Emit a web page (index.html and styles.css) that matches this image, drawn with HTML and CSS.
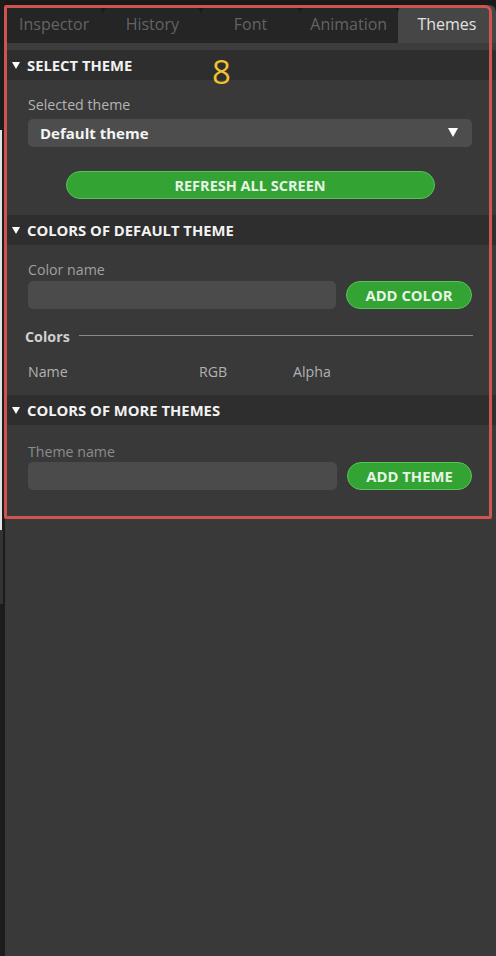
FILE: index.html
```html
<!DOCTYPE html>
<html>
<head>
<meta charset="utf-8">
<link rel="stylesheet" href="styles.css">
</head>
<body>
  <div class="edge">
    <div class="edge-top"></div>
    <div class="edge-line"></div>
    <div class="edge-gray"></div>
  </div>
  <div class="panel">
    <div class="tabs">
      <div class="tab">Inspector</div>
      <div class="tab">History</div>
      <div class="tab">Font</div>
      <div class="tab">Animation</div>
      <div class="tab active">Themes</div>
    </div>
    <div class="strip"></div>

    <div class="sec-head">
      <svg class="caret" width="8" height="7" viewBox="0 0 8 7"><path d="M0 0H8L4 7Z" fill="#fff"/></svg>
      <span>SELECT THEME</span>
    </div>
    <div class="sec-body body1">
      <div class="label">Selected theme</div>
      <div class="select">
        <span>Default theme</span>
        <svg width="10" height="9" viewBox="0 0 10 9"><path d="M0 0H10L5 9Z" fill="#fff"/></svg>
      </div>
      <div class="btn refresh">REFRESH ALL SCREEN</div>
    </div>

    <div class="sec-head">
      <svg class="caret" width="8" height="7" viewBox="0 0 8 7"><path d="M0 0H8L4 7Z" fill="#fff"/></svg>
      <span>COLORS OF DEFAULT THEME</span>
    </div>
    <div class="sec-body body2">
      <div class="label">Color name</div>
      <div class="row">
        <div class="input"></div>
        <div class="btn add">ADD COLOR</div>
      </div>
      <div class="divider">
        <span>Colors</span>
        <div class="rule"></div>
      </div>
      <div class="cols">
        <span>Name</span>
        <span>RGB</span>
        <span>Alpha</span>
      </div>
    </div>

    <div class="sec-head">
      <svg class="caret" width="8" height="7" viewBox="0 0 8 7"><path d="M0 0H8L4 7Z" fill="#fff"/></svg>
      <span>COLORS OF MORE THEMES</span>
    </div>
    <div class="sec-body body3">
      <div class="label dim">Theme name</div>
      <div class="row">
        <div class="input"></div>
        <div class="btn add">ADD THEME</div>
      </div>
    </div>
  </div>

  <div class="annot-box"></div>
  <div class="annot-num">8</div>
</body>
</html>
```

FILE: styles.css
```css
html, body {
  margin: 0;
  padding: 0;
}
body {
  width: 496px;
  height: 956px;
  background: #1c1c1c;
  display: flex;
  font-family: "Open Sans", "Noto Sans", sans-serif;
  overflow: hidden;
  position: relative;
}
.edge {
  width: 5px;
  display: flex;
  flex-direction: column;
}
.edge-top {
  height: 130px;
}
.edge-line {
  height: 400px;
  width: 2px;
  background: #e4e4e4;
}
.edge-gray {
  height: 74px;
  width: 3px;
  background: #333;
}
.panel {
  flex: 1;
  background: #393939;
  display: flex;
  flex-direction: column;
}
.tabs {
  height: 43px;
  background: #1a1a1a;
  display: flex;
  align-items: flex-end;
}
.tab {
  flex: 1;
  height: 36px;
  background: #252525;
  border-radius: 7px 7px 0 0;
  color: #636363;
  font-size: 16px;
  display: flex;
  align-items: center;
  justify-content: center;
  padding-bottom: 2px;
  box-sizing: border-box;
}
.tab.active {
  height: 38px;
  background: #464646;
  color: #e2e2e2;
  padding-top: 0;
  padding-bottom: 0;
}
.strip {
  height: 7px;
  background: #3d3d3d;
}
.sec-head {
  height: 30px;
  background: #2e2e2e;
  display: flex;
  align-items: center;
  padding-left: 7px;
  color: #f2f2f2;
  font-weight: 700;
  font-size: 14.8px;
}
.caret {
  margin-right: 7px;
  margin-top: 1px;
}
.sec-body {
  padding: 15px 24px 0 23px;
  display: flex;
  flex-direction: column;
}
.label {
  font-size: 14.2px;
  line-height: 20px;
  color: #a0a0a0;
}
.label.dim {
  color: #8c8c8c;
}
.body1 {
  height: 135px;
  box-sizing: border-box;
}
.body1 .label {
  color: #b4b4b4;
}
.select {
  margin-top: 4px;
  height: 28px;
  background: #4d4d4d;
  border-radius: 5px;
  display: flex;
  align-items: center;
  justify-content: space-between;
  padding: 0 14px 0 12px;
  color: #f4f4f4;
  font-weight: 700;
  font-size: 15px;
}
.select svg {
  margin-top: -1px;
}
.btn {
  height: 28px;
  box-sizing: border-box;
  background: #33a334;
  border: 1px solid #56c356;
  border-radius: 14px;
  color: #e6f4e6;
  font-weight: 700;
  font-size: 14px;
  display: flex;
  align-items: center;
  justify-content: center;
}
.refresh {
  margin: 24px auto 0;
  width: 369px;
  font-size: 14.5px;
}
.body2 {
  height: 150px;
  box-sizing: border-box;
}
.row {
  margin-top: 1px;
  display: flex;
  gap: 10px;
  height: 28px;
}
.input {
  flex: 1;
  background: #4b4b4b;
  border-radius: 5px;
}
.add {
  width: 126px;
  font-size: 14.8px;
}
.divider {
  margin-top: 17px;
  margin-left: -3px;
  height: 20px;
  display: flex;
  align-items: center;
  gap: 9px;
  color: #cfcfcf;
  font-weight: 700;
  font-size: 14.3px;
}
.rule {
  flex: 1;
  height: 1px;
  background: #8a8a8a;
  margin-top: -2px;
  margin-right: -1px;
}
.cols {
  margin-top: 16px;
  display: grid;
  grid-template-columns: 171px 94px 1fr;
  font-size: 14.2px;
  line-height: 20px;
  color: #b2b2b2;
}
.body3 {
  padding-top: 17px;
}
.body3 .row {
  margin-top: 0;
}
.body3 .add {
  width: 125px;
}
.annot-box {
  position: absolute;
  left: 4px;
  top: 5px;
  width: 488px;
  height: 514px;
  box-sizing: border-box;
  border: 3px solid #cf5450;
  border-radius: 2px 7px 2px 2px;
  pointer-events: none;
}
.annot-num {
  position: absolute;
  left: 212px;
  top: 55px;
  font-size: 33px;
  line-height: 33px;
  color: #f1c12f;
}
```
